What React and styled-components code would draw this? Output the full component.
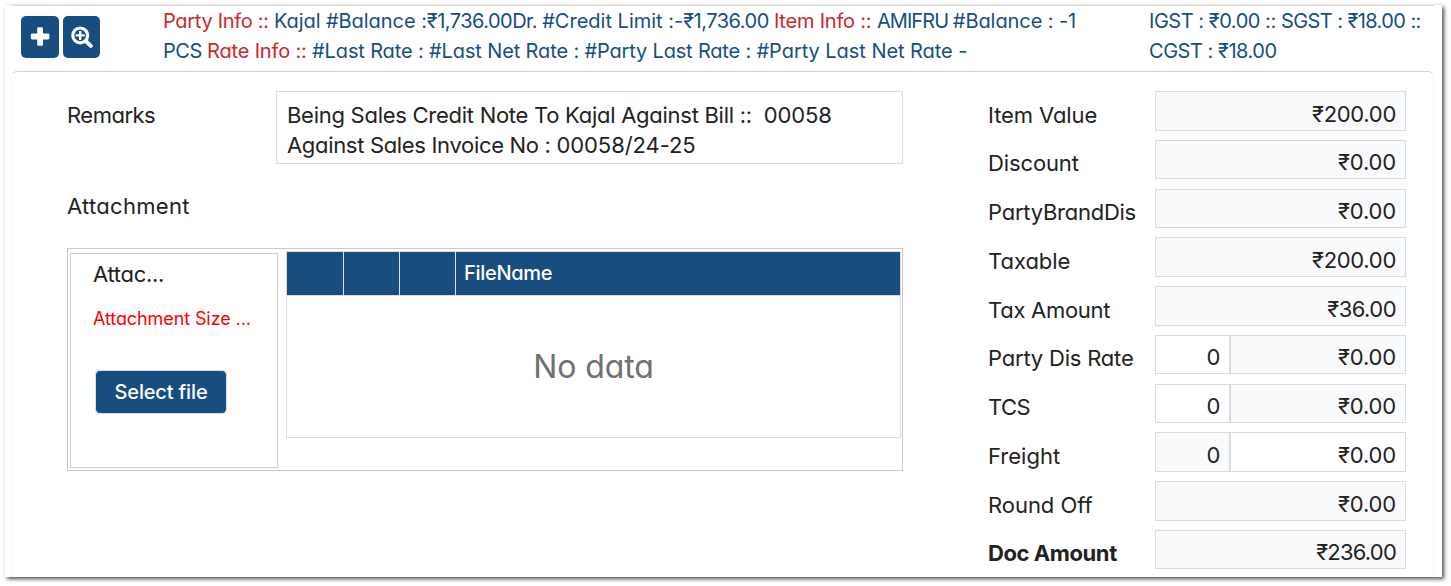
import React from "react";
import styled, { createGlobalStyle } from "styled-components";

const Global = createGlobalStyle`
    * {
        box-sizing: border-box;
    }

    body {
        margin: 0;
        background: white;
        color: #222;
        font-family: Inter, "Noto Sans", sans-serif;
        font-feature-settings: "cv11" 1, "calt" 0;
        font-size: 22px;
        overflow: hidden;
    }
`;

const Page = styled.div`
    height: 586px;
    padding: 5px 9px 9px 5px;
`;

const Window = styled.div`
    height: 572px;
    padding: 0 8px 0 6px;
    background: #fff;
    box-shadow: 2px 2px 4px rgba(0, 0, 0, 0.7);
`;

const TopBar = styled.header`
    display: flex;
    height: 66px;
    border-top: 1px solid #d8d8d8;
`;

const Tools = styled.div`
    display: flex;
    gap: 4px;
    width: 152px;
    padding: 10px 0 0 10px;
`;

const ToolButton = styled.button`
    display: flex;
    align-items: center;
    justify-content: center;
    width: ${(props) => props.$width}px;
    height: 42px;
    padding: 0;
    border: 0;
    border-radius: 5px;
    background: #184e7f;
    color: white;
    cursor: pointer;
`;

const Info = styled.div`
    width: ${(props) => props.$width}px;
    font-size: 20px;
    line-height: 30px;
    white-space: pre;
    color: #184e7f;
`;

const Chunk = styled.span`
    letter-spacing: ${(props) => props.$track || 0}px;
    color: ${(props) => (props.$title ? "#c9282d" : "inherit")};
`;

const Panel = styled.main`
    display: flex;
    height: 506px;
    border: 1px solid #f6f6f6;
    border-top-color: #d3d3de;
    border-bottom: 0;
    border-radius: 6px 6px 0 0;
`;

const Details = styled.section`
    width: 891px;
    padding: 19px 0 0 55px;
`;

const RemarksRow = styled.div`
    display: flex;
`;

const FieldLabel = styled.label`
    flex: none;
    width: ${(props) => props.$width || 209}px;
    padding-top: 9px;
    line-height: 30px;
    letter-spacing: ${(props) => props.$track || 0}px;
    white-space: nowrap;
`;

const TotalLabel = styled(FieldLabel)`
    padding-top: 8.4px;
    font-weight: ${(props) => (props.$bold ? 700 : 400)};
`;

const Remarks = styled.div`
    width: 627px;
    height: 73px;
    padding: 8px 10px;
    border: 1px solid #dcdcdf;
    line-height: 30px;
    white-space: pre;
`;

const AttachmentRow = styled.div`
    height: 84px;
    padding-top: 18px;
`;

const Uploader = styled.div`
    display: flex;
    width: 836px;
    height: 223px;
    padding: 2px 1px 1px 2px;
    border: 1px solid #c9c9c9;
`;

const UploadBox = styled.div`
    width: 208px;
    height: 215px;
    margin: 2px 8px 0 0;
    padding: 5px 20px 0 22px;
    border: 1px solid #d0d0d0;
`;

const UploadTitle = styled.div`
    line-height: 30px;
    letter-spacing: -0.3px;
`;

const UploadNote = styled.div`
    margin-top: 16px;
    color: #f00;
    font-size: 18px;
    line-height: 28px;
    letter-spacing: -0.1px;
    white-space: nowrap;
`;

const SelectButton = styled.button`
    width: 132px;
    height: 44px;
    margin: 37px 0 0 2px;
    padding: 0 0 1px;
    border: 1px solid #d5dde5;
    border-radius: 5px;
    background: #184e7f;
    color: white;
    font: inherit;
    font-size: 20px;
    font-weight: 500;
    letter-spacing: -0.15px;
    cursor: pointer;
`;

const Files = styled.div`
    width: 615px;
    height: 187px;
    border: 1px solid #dcdcdc;
`;

const FilesHead = styled.div`
    display: grid;
    grid-template-columns: 57px 56px 56px 1fr;
    height: 44px;
    border-bottom: 1px solid #dcdcdc;
    background: #184e7f;
    color: white;
    font-size: 20px;
    font-weight: 500;
    line-height: 42px;
    letter-spacing: -0.3px;
`;

const HeadCell = styled.div`
    padding-left: 8px;
    border-right: 1px solid #dce4ec;

    &:last-child {
        border-right: 0;
    }
`;

const Empty = styled.div`
    padding-top: 51px;
    color: #707070;
    font-size: 32px;
    line-height: 40px;
    letter-spacing: -0.1px;
    text-align: center;
`;

const Totals = styled.section`
    width: 530px;
    padding: 19.2px 0 0 85px;
`;

const TotalRow = styled.div`
    display: flex;
    height: 48.75px;
`;

const Amount = styled.div`
    width: ${(props) => props.$width}px;
    height: 39.5px;
    padding: 0.5px ${(props) => props.$pad || 9}px 0 0;
    border: 1px solid #dadbde;
    background: ${(props) => (props.$editable ? "#fff" : "#f9fafc")};
    line-height: 43.2px;
    letter-spacing: ${(props) => props.$track || 0}px;
    text-align: right;
`;

const partyInfo = [
    [
        { text: "Party Info :: ", track: -0.31, title: true },
        { text: "Kajal ", track: -0.08 },
        { text: "#Balance :", track: -0.05 },
        { text: "₹1,736.00Dr. ", track: -0.52 },
        { text: "#Credit Limit :-", track: 0 },
        { text: "₹1,736.00 ", track: -0.5 },
        { text: "Item Info :: ", track: -0.2, title: true },
        { text: "AMIFRU ", track: -0.92 },
        { text: "#Balance : -1", track: -0.08 },
    ],
    [
        { text: "PCS ", track: -0.45 },
        { text: "Rate Info :: ", track: -0.17, title: true },
        { text: "#Last Rate : ", track: -0.14 },
        { text: "#Last Net Rate : ", track: -0.13 },
        { text: "#Party Last Rate : ", track: -0.18 },
        { text: "#Party Last Net Rate -", track: -0.05 },
    ],
];

const taxInfo = [
    [
        { text: "IGST : ₹0.00 :: ", track: -0.46 },
        { text: "SGST : ₹18.00 ::", track: -0.57 },
    ],
    [{ text: "CGST : ₹18.00", track: -0.46 }],
];

const remarks = [
    [
        { text: "Being Sales Credit Note To Kajal Against Bill ::  ", track: -0.27 },
        { text: "00058", track: -0.13 },
    ],
    [
        { text: "Against Sales Invoice No : ", track: -0.32 },
        { text: "00058/24-25", track: -0.08 },
    ],
];

const totals = [
    { label: "Item Value", track: -0.1, value: "₹200.00", valueTrack: -0.3 },
    { label: "Discount", track: -0.12, value: "₹0.00" },
    { label: "PartyBrandDis", track: -0.25, value: "₹0.00" },
    { label: "Taxable", track: -0.02, value: "₹200.00", valueTrack: -0.3 },
    { label: "Tax Amount", track: -0.28, value: "₹36.00", valueTrack: -0.55 },
    { label: "Party Dis Rate", track: -0.2, rate: "0", rateEditable: true, value: "₹0.00" },
    { label: "TCS", track: -0.6, rate: "0", rateEditable: true, value: "₹0.00" },
    { label: "Freight", rate: "0", value: "₹0.00", editable: true },
    { label: "Round Off", track: -0.05, value: "₹0.00" },
    { label: "Doc Amount", track: -0.42, bold: true, value: "₹236.00", valueTrack: -0.8 },
];

const PlusIcon = () => (
    <svg width="20" height="20" viewBox="0 0 20 20" fill="white">
        <rect x="0.8" y="6.6" width="18.6" height="5.8" rx="1.3" />
        <rect x="7.2" y="0.3" width="5.8" height="18.4" rx="1.3" />
    </svg>
);

const ZoomIcon = () => (
    <svg width="23" height="23" viewBox="0 0 23 23" fill="none" stroke="white">
        <circle cx="10.2" cy="9.4" r="7.4" strokeWidth="3.2" />
        <path d="M16 15.3l4.8 4.6" strokeWidth="4" strokeLinecap="round" />
        <path d="M10.2 4.9v9M5.7 9.4h9" strokeWidth="2.4" />
    </svg>
);

const Lines = ({ lines }) =>
    lines.map((line) => (
        <div key={line[0].text}>
            {line.map((v) => (
                <Chunk key={v.text} $track={v.track} $title={v.title}>{v.text}</Chunk>
            ))}
        </div>
    ));

const App = () => (
    <Page>
        <Global />
        <Window>
            <TopBar>
                <Tools>
                    <ToolButton $width={38}><PlusIcon /></ToolButton>
                    <ToolButton $width={37}><ZoomIcon /></ToolButton>
                </Tools>
                <Info $width={986}><Lines lines={partyInfo} /></Info>
                <Info $width={280}><Lines lines={taxInfo} /></Info>
            </TopBar>
            <Panel>
                <Details>
                    <RemarksRow>
                        <FieldLabel $track={-0.5}>Remarks</FieldLabel>
                        <Remarks><Lines lines={remarks} /></Remarks>
                    </RemarksRow>
                    <AttachmentRow>
                        <FieldLabel as="div" $track={0.3}>Attachment</FieldLabel>
                    </AttachmentRow>
                    <Uploader>
                        <UploadBox>
                            <UploadTitle>Attac...</UploadTitle>
                            <UploadNote>Attachment Size ...</UploadNote>
                            <SelectButton>Select file</SelectButton>
                        </UploadBox>
                        <Files>
                            <FilesHead>
                                <HeadCell />
                                <HeadCell />
                                <HeadCell />
                                <HeadCell>FileName</HeadCell>
                            </FilesHead>
                            <Empty>No data</Empty>
                        </Files>
                    </Uploader>
                </Details>
                <Totals>
                    {totals.map((v) => (
                        <TotalRow key={v.label}>
                            <TotalLabel $width={167} $track={v.track} $bold={v.bold}>{v.label}</TotalLabel>
                            {v.rate && <Amount $width={75} $pad={8.5} $editable={v.rateEditable}>{v.rate}</Amount>}
                            <Amount
                                $width={v.rate ? 176 : 251}
                                $editable={v.editable}
                                $track={v.valueTrack || -0.16}
                            >
                                {v.value}
                            </Amount>
                        </TotalRow>
                    ))}
                </Totals>
            </Panel>
        </Window>
    </Page>
);

export default App;
